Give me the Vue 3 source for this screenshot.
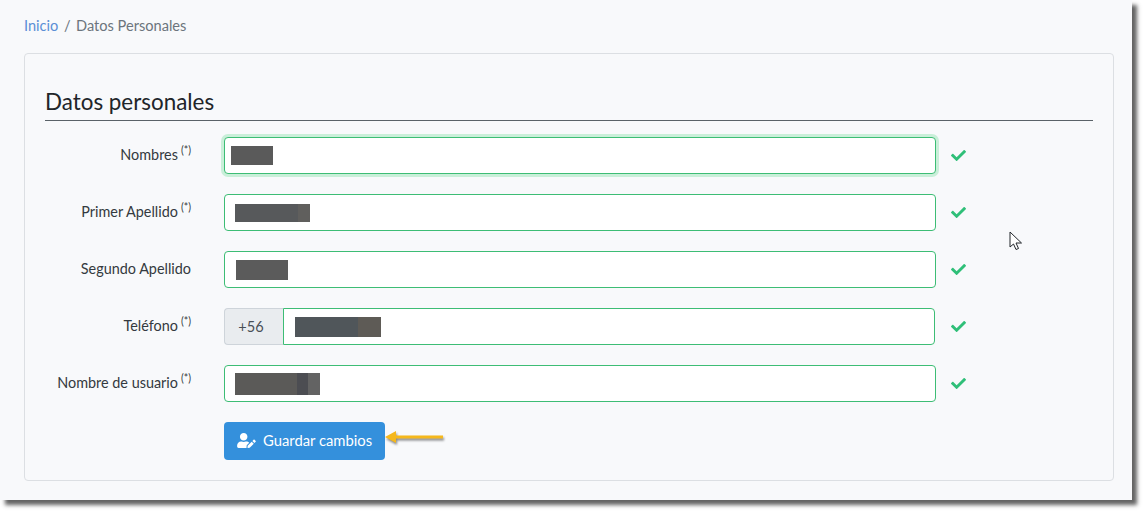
<template>
  <div class="shot">
    <div class="page">
      <nav class="crumbs">
        <a class="crumb-link">Inicio</a>
        <span class="crumb-sep">/</span>
        <span>Datos Personales</span>
      </nav>

      <section class="card">
        <h2 class="title">Datos personales</h2>

        <div v-for="row in rows" :key="row.label" class="row">
          <label class="label">
            {{ row.label }}<sup v-if="row.required" class="req">(*)</sup>
          </label>
          <div class="field-wrap">
            <span v-if="row.prefix" class="prefix">{{ row.prefix }}</span>
            <div class="field" :class="{ focused: row.focused, joined: row.prefix }">
              <span class="redact" :style="{ width: row.w + 'px', height: row.h + 'px', marginLeft: row.x + 'px', background: row.bg }"></span>
            </div>
          </div>
          <svg class="check" viewBox="0 0 512 512">
            <path d="M173.898 439.404l-166.4-166.4c-9.997-9.997-9.997-26.206 0-36.204l36.203-36.204c9.997-9.998 26.207-9.998 36.204 0L192 312.69 432.095 72.596c9.997-9.997 26.207-9.997 36.204 0l36.203 36.204c9.997 9.997 9.997 26.206 0 36.204l-294.4 294.401c-9.998 9.997-26.207 9.997-36.204-.001z" />
          </svg>
        </div>

        <div class="actions">
          <button class="save">
            <svg class="save-icon" viewBox="0 0 640 512">
              <path d="M224 256c70.7 0 128-57.3 128-128S294.7 0 224 0 96 57.3 96 128s57.3 128 128 128zm89.6 32h-16.7c-22.2 10.2-46.9 16-72.9 16s-50.6-5.8-72.9-16h-16.7C60.2 288 0 348.2 0 422.4V464c0 26.5 21.5 48 48 48h274.9c-2.4-6.8-3.4-14-2.6-21.3l6.8-60.9 1.2-11.1 7.9-7.9 77.3-77.3c-24.5-27.7-60-45.5-99.9-45.5zm45.3 145.3l-6.8 61c-1.1 10.2 7.5 18.8 17.6 17.6l60.9-6.8 137.9-137.9-71.7-71.7-137.9 137.8zM633 268.9L595.1 231c-9.3-9.3-24.5-9.3-33.8 0l-37.8 37.8-4.1 4.1 71.8 71.7 41.8-41.8c9.3-9.4 9.3-24.5 0-33.9z" />
            </svg>
            <span class="save-text">Guardar cambios</span>
          </button>
          <!-- yellow arrow annotation -->
          <svg class="arrow" width="62" height="20" viewBox="0 0 62 20">
            <path d="M1 9 L12 3 L12 7.5 L59 7.5 L59 10.5 L12 10.5 L12 15 Z" fill="#f5b81c" />
          </svg>
        </div>
      </section>

      <!-- mouse cursor caught in the capture -->
      <svg class="cursor" width="14" height="20" viewBox="0 0 14 20">
        <path d="M1 1 L1 16 L4.5 13 L7 18.5 L9.5 17.5 L7 12 L12.5 12 Z" fill="#fff" stroke="#22262b" stroke-width="1" stroke-linejoin="round" />
      </svg>
    </div>
  </div>
</template>

<script setup>
const rows = [
  { label: "Nombres", required: true, focused: true, x: 6, w: 42, h: 19, bg: "#5a5a5a" },
  { label: "Primer Apellido", required: true, x: 10, w: 75, h: 18, bg: "linear-gradient(90deg, #57595b 84%, #605f5d 84%)" },
  { label: "Segundo Apellido", required: false, x: 11, w: 52, h: 20, bg: "#5b5b5b" },
  { label: "Teléfono", required: true, prefix: "+56", x: 11, w: 86, h: 20, bg: "linear-gradient(90deg, #50565a 73%, #5e5b56 73%)" },
  { label: "Nombre de usuario", required: true, x: 10, w: 85, h: 22, bg: "linear-gradient(90deg, #5b5a58 73%, #4c4d52 73%, #4c4d52 86%, #636363 86%)" },
];
</script>

<style>
html,
body {
  background: #fff;
}
</style>

<style scoped>
.shot {
  width: 1147px;
  height: 515px;
  overflow: hidden;
  font-family: "Lato", "Noto Sans", sans-serif;
  color: #343a40;
}

.page {
  position: relative;
  box-sizing: border-box;
  width: 1132px;
  height: 500px;
  padding: 15px 18px 0 24px;
  background: #f8f9fb;
  box-shadow: 5px 5px 4px rgba(60, 60, 60, 0.8);
}

.crumbs {
  display: flex;
  gap: 5.5px;
  height: 20px;
  align-items: center;
  font-size: 14.6px;
  color: #6c757d;
}

.crumb-link {
  color: #5b8fd6;
}

.card {
  box-sizing: border-box;
  height: 428px;
  margin-top: 18px;
  padding: 33px 20px 0;
  border: 1px solid #dcdfe3;
  border-radius: 4px;
}

.title {
  height: 33px;
  margin: 0 0 16px;
  border-bottom: 1px solid #5a6268;
  font-size: 22.4px;
  font-weight: 400;
  line-height: 30px;
  color: #212529;
}

.row {
  display: flex;
  align-items: center;
  height: 37px;
  margin-bottom: 20px;
}

.label {
  width: 146px;
  margin-right: 33px;
  padding-bottom: 2px;
  text-align: right;
  font-size: 14.4px;
}

.req {
  margin-left: 3px;
  font-size: 10.5px;
  line-height: 0;
}

.field-wrap {
  display: flex;
  width: 712px;
  height: 37px;
}

.prefix {
  box-sizing: border-box;
  display: flex;
  align-items: center;
  justify-content: center;
  width: 59px;
  padding-right: 6px;
  border: 1px solid #ced4da;
  border-right: 0;
  border-radius: 4px 0 0 4px;
  background: #e9ecef;
  font-size: 14.6px;
  color: #495057;
}

.field {
  box-sizing: border-box;
  flex: 1;
  display: flex;
  align-items: center;
  border: 1px solid #3dbd75;
  border-radius: 4px;
  background: #fff;
}

.field.joined {
  border-radius: 0 4px 4px 0;
  margin-right: 1px;
}

.field.focused {
  box-shadow: 0 0 0 3px #c9efd9;
}

.redact {
  display: block;
}

.check {
  width: 15px;
  height: 15px;
  margin-left: 15px;
  fill: #2fbf78;
}

.actions {
  position: relative;
  height: 38px;
  margin-left: 179px;
}

.save {
  display: flex;
  align-items: center;
  box-sizing: border-box;
  width: 161px;
  height: 38px;
  padding: 0 0 0 13px;
  border: 0;
  border-radius: 4px;
  background: #3490dc;
  font-family: inherit;
  font-size: 14.8px;
  color: #fff;
}

.save-text {
  padding-bottom: 2px;
}

.save-icon {
  width: 19px;
  height: 15px;
  margin-right: 7px;
  margin-bottom: 2px;
  fill: #fff;
}

.arrow {
  position: absolute;
  left: 160px;
  top: 6px;
  filter: drop-shadow(1px 2px 1px rgba(0, 0, 0, 0.45));
}

.cursor {
  position: absolute;
  left: 1009px;
  top: 231px;
}
</style>
